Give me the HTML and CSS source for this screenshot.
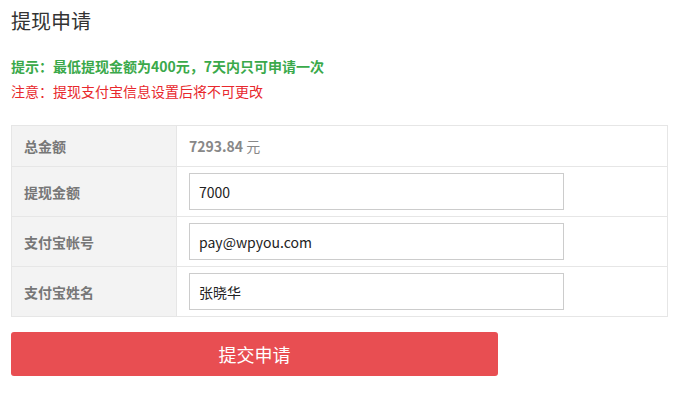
FILE: index.html
```html
<!DOCTYPE html>
<html lang="zh-CN">
<head>
    <meta charset="UTF-8">
    <meta name="viewport" content="width=device-width, initial-scale=1.0">
    <title>提现申请</title>
    <link rel="stylesheet" href="styles.css">
</head>
<body>
    <div class="container">
        <h1>提现申请</h1>
        <p class="tip">提示：最低提现金额为400元，7天内只可申请一次</p>
        <p class="warn">注意：提现支付宝信息设置后将不可更改</p>

        <form id="cashForm">
            <table class="form-table">
                <tr class="row-total">
                    <th>总金额</th>
                    <td><span class="amount">7293.84</span> 元</td>
                </tr>
                <tr>
                    <th>提现金额</th>
                    <td><input type="text" value="7000"></td>
                </tr>
                <tr>
                    <th>支付宝帐号</th>
                    <td><input type="text" value="pay@wpyou.com"></td>
                </tr>
                <tr>
                    <th>支付宝姓名</th>
                    <td><input type="text" value="张晓华"></td>
                </tr>
            </table>
            <button type="submit">提交申请</button>
        </form>
    </div>
</body>
</html>
```

FILE: styles.css
```css
body {
    font-family: "Noto Sans CJK SC", "Noto Sans", sans-serif;
    background: #fff;
    margin: 0;
    padding: 0;
    color: #333;
}
.container {
    padding: 8px 12px 0 11px;
}
h1 {
    font-size: 20px;
    font-weight: normal;
    line-height: 26px;
    margin: 0;
    color: #333;
}
.tip {
    margin: 21px 0 0;
    font-size: 14px;
    line-height: 22px;
    font-weight: bold;
    color: #3aa94a;
}
.warn {
    margin: 3px 0 0;
    font-size: 14px;
    line-height: 22px;
    color: #e8282d;
}
.form-table {
    width: 100%;
    margin-top: 23px;
    border-collapse: collapse;
}
.form-table th,
.form-table td {
    border: 1px solid #e6e6e6;
    padding: 6px 12px 6px 12px;
    height: 37px;
    font-size: 14px;
}
.form-table th {
    width: 140px;
    background: #f3f3f3;
    color: #777;
    text-align: left;
    font-weight: bold;
}
.form-table .row-total th,
.form-table .row-total td {
    height: 28px;
}
.form-table td {
    color: #888;
}
.amount {
    font-weight: bold;
}
input {
    width: 375px;
    height: 37px;
    box-sizing: border-box;
    padding: 0 9px;
    border: 1px solid #ccc;
    font-family: inherit;
    font-size: 14px;
    color: #222;
    display: block;
}
button {
    margin-top: 15px;
    width: 487px;
    height: 44px;
    background: #e84e52;
    color: #fff;
    border: none;
    border-radius: 3px;
    font-family: inherit;
    font-size: 18px;
    cursor: pointer;
}
button:hover {
    background: #d9383c;
}
```
